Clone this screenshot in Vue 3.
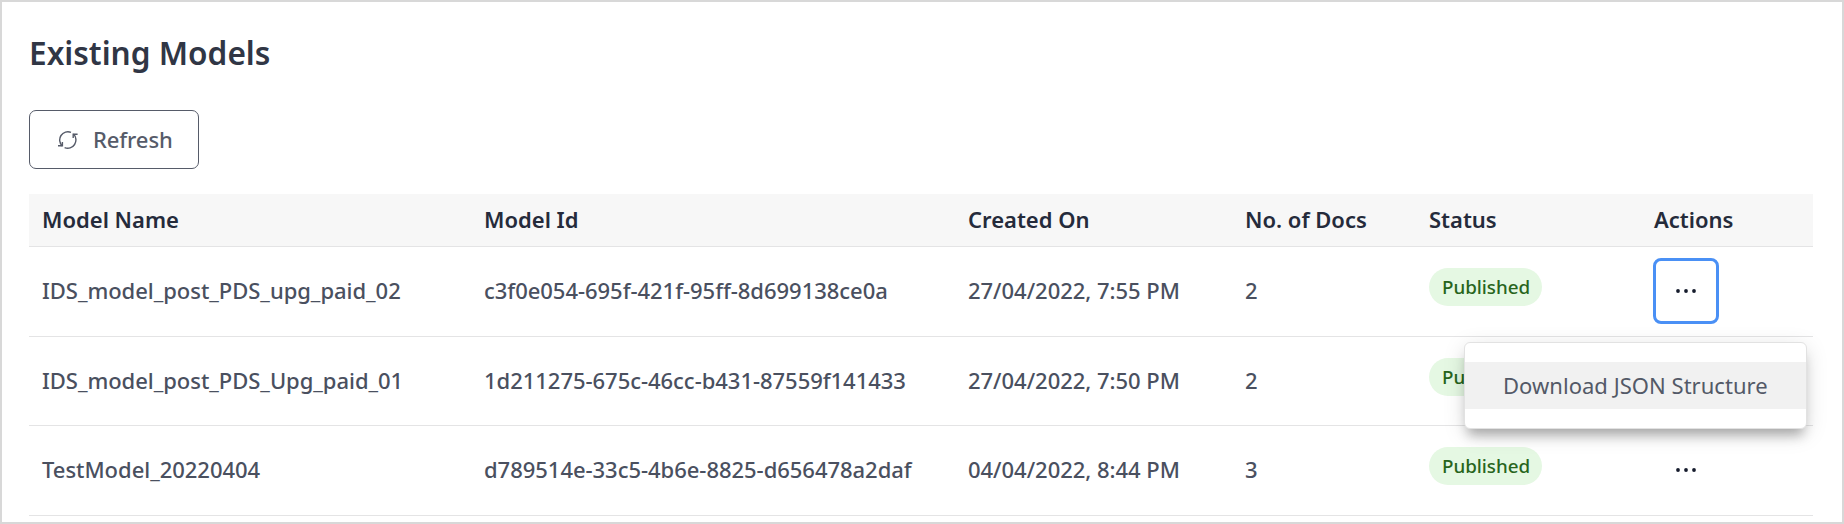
<script setup>
const columns = ['Model Name', 'Model Id', 'Created On', 'No. of Docs', 'Status', 'Actions']

const models = [
  { name: 'IDS_model_post_PDS_upg_paid_02', id: 'c3f0e054-695f-421f-95ff-8d699138ce0a', created: '27/04/2022, 7:55 PM', docs: 2, status: 'Published', open: true },
  { name: 'IDS_model_post_PDS_Upg_paid_01', id: '1d211275-675c-46cc-b431-87559f141433', created: '27/04/2022, 7:50 PM', docs: 2, status: 'Published', open: false },
  { name: 'TestModel_20220404', id: 'd789514e-33c5-4b6e-8825-d656478a2daf', created: '04/04/2022, 8:44 PM', docs: 3, status: 'Published', open: false },
]
</script>

<template>
  <main class="panel">
    <h1 class="title">Existing Models</h1>
    <button class="refresh" type="button">
      <svg class="refresh-icon" width="20" height="18" viewBox="0 0 20 18" fill="none" stroke="currentColor" stroke-width="1.4">
        <path d="M13 1.4A8.2 8.2 0 0 0 4.2 14.9" />
        <path d="M6.6 16.6A8.2 8.2 0 0 0 15.4 3.1" />
        <path d="M0 14.8H4.4V10.9" />
        <path d="M19.6 3.2H15.2V7.1" />
      </svg>
      <span class="refresh-label">Refresh</span>
    </button>

    <div class="table" role="table">
      <div class="row head" role="row">
        <div v-for="c in columns" :key="c" class="cell" role="columnheader">{{ c }}</div>
      </div>
      <div v-for="m in models" :key="m.id" class="row body" role="row">
        <div class="cell">{{ m.name }}</div>
        <div class="cell">{{ m.id }}</div>
        <div class="cell">{{ m.created }}</div>
        <div class="cell">{{ m.docs }}</div>
        <div class="cell status"><span class="pill">{{ m.status }}</span></div>
        <div class="cell actions">
          <button class="more" :class="{ focused: m.open }" type="button" aria-label="More actions">
            <svg width="22" height="6" viewBox="0 0 22 6" fill="currentColor">
              <circle cx="3" cy="3" r="1.9" />
              <circle cx="11" cy="3" r="1.9" />
              <circle cx="19" cy="3" r="1.9" />
            </svg>
          </button>
          <div v-if="m.open" class="menu">
            <div class="menu-item">Download JSON Structure</div>
          </div>
        </div>
      </div>
    </div>
  </main>
</template>

<style>
body {
  background: #fff;
}
</style>

<style scoped>
.panel {
  box-sizing: border-box;
  width: 1844px;
  height: 524px;
  padding: 30px 29px 0 27px;
  border: 2px solid #d8d8d8;
  background: #fff;
  color: #4a505f;
  font-family: "Noto Sans", sans-serif;
  font-size: 22px;
  overflow: hidden;
}
.title {
  margin: 0 0 36px;
  height: 42px;
  line-height: 42px;
  font-size: 31.6px;
  font-weight: 600;
  color: #303645;
}
.refresh {
  display: flex;
  align-items: center;
  box-sizing: border-box;
  width: 170px;
  height: 59px;
  margin: 0 0 25px;
  padding: 0 0 0 28px;
  gap: 15px;
  border: 1px solid #565b69;
  border-radius: 7px;
  background: #fff;
  color: #565b69;
  font: 500 22px/30px "Noto Sans", sans-serif;
  letter-spacing: -0.1px;
}
.refresh-label {
  padding-bottom: 2px;
}
.row {
  display: grid;
  grid-template-columns: 442px 484px 277px 184px 225px 172px;
  box-sizing: border-box;
  border-bottom: 1px solid #e4e4e5;
}
.head {
  height: 53px;
  background: #f7f7f7;
  color: #252b3b;
  font-weight: 600;
}
.body {
  height: 90px;
}
.body:nth-child(3) {
  height: 89px;
}
.cell {
  display: flex;
  align-items: center;
  padding: 0 0 2px 13px;
  white-space: nowrap;
}
.body .cell {
  padding-bottom: 3px;
  font-weight: 500;
  letter-spacing: -0.03px;
}
.body .status {
  align-items: flex-start;
  padding-top: 21px;
}
.pill {
  box-sizing: border-box;
  width: 113px;
  height: 38px;
  padding: 0 13px;
  border-radius: 19px;
  background: #e5f8e3;
  color: #28651c;
  font-size: 18.8px;
  line-height: 38px;
}
.body .actions {
  position: relative;
  align-items: flex-start;
  padding: 11px 0 0 12px;
}
.more {
  display: flex;
  align-items: center;
  justify-content: center;
  box-sizing: border-box;
  width: 66px;
  height: 66px;
  padding: 0;
  border: 3px solid transparent;
  border-radius: 8px;
  background: transparent;
  color: #151b2c;
}
.focused {
  border-color: #4a90f5;
}
.menu {
  position: absolute;
  z-index: 2;
  top: 95px;
  right: 6px;
  box-sizing: border-box;
  width: 343px;
  height: 87px;
  padding: 19px 0;
  border: 1px solid #e2e2e2;
  border-radius: 6px;
  background: #fff;
  box-shadow: 0 10px 12px -4px rgba(0, 0, 0, 0.28), 0 5px 22px rgba(0, 0, 0, 0.13);
}
.menu-item {
  height: 47px;
  padding-left: 38px;
  background: #f1f1f1;
  color: #535967;
  font-weight: 400;
  letter-spacing: 0.03px;
  line-height: 47px;
}
</style>
